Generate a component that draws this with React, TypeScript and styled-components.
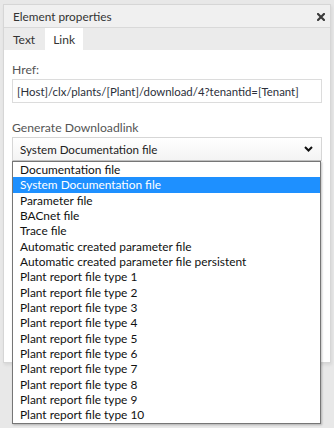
import React from "react";
import styled, { createGlobalStyle } from "styled-components";

const Global = createGlobalStyle`
  html, body { margin: 0; padding: 0; }
  body {
    background: #e8e8e8;
    font-family: "Lato", "Open Sans", sans-serif;
    color: #333;
    width: 334px;
    height: 428px;
    overflow: hidden;
  }
`;

const Page = styled.div`
  padding: 4px 3px 0 3px;
  height: 428px;
  box-sizing: border-box;
`;

const Panel = styled.div`
  width: 328px;
  height: 359px;
  box-sizing: border-box;
  border: 1px solid #d6d6d6;
  background: #fff;
  display: flex;
  flex-direction: column;
  box-shadow: 1px 2px 3px rgba(0, 0, 0, 0.08);
`;

const Header = styled.div`
  height: 23px;
  flex: none;
  display: flex;
  align-items: center;
  justify-content: space-between;
  padding: 1px 4px 0 9px;
  box-sizing: border-box;
  background: #f0f0f0;
  border-bottom: 1px solid #d9d9d9;
  font-size: 11.8px;
  color: #333;
`;

const Close = styled.button`
  border: none;
  background: none;
  padding: 0;
  width: 10px;
  height: 10px;
  display: flex;
  align-items: center;
  justify-content: center;
  cursor: pointer;
`;

const Tabs = styled.div`
  height: 22px;
  flex: none;
  display: flex;
  background: #ebebeb;
`;

const Tab = styled.div<{ $active?: boolean }>`
  padding: 1px ${(p) => (p.$active ? "8px" : "10px")} 0
    ${(p) => (p.$active ? "8px" : "9px")};
  display: flex;
  align-items: center;
  font-size: 12px;
  color: #333;
  background: ${(p) => (p.$active ? "#fff" : "transparent")};
`;

const Body = styled.div`
  flex: 1;
  padding: 12px 8px 0 8px;
  display: flex;
  flex-direction: column;
`;

const Label = styled.div<{ $top?: number }>`
  font-size: 12.2px;
  line-height: 16px;
  color: #555;
  margin-top: ${(p) => p.$top ?? 0}px;
  margin-bottom: 1px;
`;

const Input = styled.div`
  height: 24px;
  box-sizing: border-box;
  border: 1px solid #dcdcdc;
  padding: 0 4px;
  display: flex;
  align-items: center;
  font-size: 11.4px;
  color: #2b2f3a;
  white-space: nowrap;
  overflow: hidden;
`;

const SelectWrap = styled.div`
  position: relative;
`;

const Select = styled.div`
  height: 24px;
  box-sizing: border-box;
  border: 1px solid #d6d6d6;
  border-bottom-color: #c4c4c4;
  background: linear-gradient(#ffffff, #f4f4f4);
  padding: 0 8px 0 7px;
  display: flex;
  align-items: center;
  justify-content: space-between;
  font-size: 11.6px;
  color: #222;
`;

const List = styled.div`
  position: absolute;
  top: 24px;
  left: 0;
  width: 309px;
  box-sizing: border-box;
  border: 1px solid #767676;
  background: #fff;
  box-shadow: 1px 1px 2px rgba(0, 0, 0, 0.25);
  z-index: 2;
`;

const Option = styled.div<{ $selected?: boolean }>`
  height: 15.33px;
  line-height: 15.33px;
  padding-left: 7px;
  font-size: 11.9px;
  white-space: nowrap;
  color: ${(p) => (p.$selected ? "#fff" : "#111")};
  background: ${(p) => (p.$selected ? "#1e90ff" : "transparent")};
`;

const options = [
  "Documentation file",
  "System Documentation file",
  "Parameter file",
  "BACnet file",
  "Trace file",
  "Automatic created parameter file",
  "Automatic created parameter file persistent",
  "Plant report file type 1",
  "Plant report file type 2",
  "Plant report file type 3",
  "Plant report file type 4",
  "Plant report file type 5",
  "Plant report file type 6",
  "Plant report file type 7",
  "Plant report file type 8",
  "Plant report file type 9",
  "Plant report file type 10",
];

export default function App() {
  return (
    <>
      <Global />
      <Page>
        <Panel>
          <Header>
            <span>Element properties</span>
            <Close aria-label="Close">
              <svg width="8" height="8" viewBox="0 0 8 8">
                <path d="M1 1 L7 7 M7 1 L1 7" stroke="#3b3b3b" strokeWidth="2.2" strokeLinecap="square" />
              </svg>
            </Close>
          </Header>
          <Tabs>
            <Tab>Text</Tab>
            <Tab $active>Link</Tab>
          </Tabs>
          <Body>
            <Label>Href:</Label>
            <Input>[Host]/clx/plants/[Plant]/download/4?tenantid=[Tenant]</Input>
            <Label $top={17}>Generate Downloadlink</Label>
            <SelectWrap>
              <Select>
                <span>System Documentation file</span>
                <svg width="9" height="6" viewBox="0 0 9 6">
                  <path d="M1 1 L4.5 4.5 L8 1" stroke="#111" strokeWidth="2" fill="none" />
                </svg>
              </Select>
              <List>
                {options.map((o) => (
                  <Option key={o} $selected={o === "System Documentation file"}>
                    {o}
                  </Option>
                ))}
              </List>
            </SelectWrap>
          </Body>
        </Panel>
      </Page>
    </>
  );
}
